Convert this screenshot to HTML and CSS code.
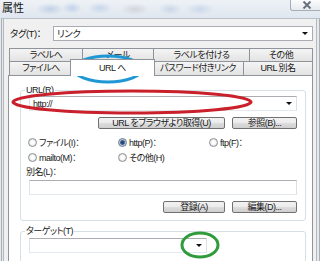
FILE: index.html
```html
<!DOCTYPE html>
<html lang="ja">
<head>
<meta charset="utf-8">
<title>属性</title>
<link rel="stylesheet" href="styles.css">
</head>
<body>
<div class="win">
  <div class="titlebar">
    <span class="title">属性</span>
    <span class="close"><svg width="10" height="8" viewBox="0 0 10 8"><path d="M1.5 0.5 L8.5 7.5 M8.5 0.5 L1.5 7.5" stroke="#6a727c" stroke-width="2" fill="none"/></svg></span>
  </div>
  <div class="frame">
    <div class="client">
      <div class="tagrow">
        <span class="lbl">タグ(T)：</span>
        <div class="combo tagcombo"><span>リンク</span><i class="arrow"></i></div>
      </div>
      <div class="tabs">
        <div class="tabrow back">
          <div class="tab w74">ラベルへ</div>
          <div class="tab w72">メール</div>
          <div class="tab w97">ラベルを付ける</div>
          <div class="tab w64">その他</div>
        </div>
        <div class="tabrow front">
          <div class="tab w64">ファイルへ</div>
          <div class="tab sel">URL へ</div>
          <div class="tab w92">パスワード付きリンク</div>
          <div class="tab w70">URL 別名</div>
        </div>
      </div>
      <div class="panel">
        <fieldset class="group">
          <legend>URL(R)</legend>
          <div class="combo urlcombo"><span>http://</span><i class="arrow"></i></div>
          <div class="btnrow">
            <div class="btn b127">URL をブラウザより取得(U)</div>
            <div class="btn b65">参照(B)...</div>
          </div>
          <div class="radios">
            <div class="radio"><i class="dot"></i><span>ファイル(I)：</span></div>
            <div class="radio"><i class="dot on"></i><span>http(P)：</span></div>
            <div class="radio"><i class="dot"></i><span>ftp(F)：</span></div>
            <div class="radio"><i class="dot"></i><span>mailto(M)：</span></div>
            <div class="radio"><i class="dot"></i><span>その他(H)</span></div>
          </div>
          <div class="alias">別名(L)：</div>
          <div class="input"></div>
          <div class="btnrow">
            <div class="btn b62">登録(A)</div>
            <div class="btn b65">編集(D)...</div>
          </div>
        </fieldset>
        <fieldset class="group target">
          <legend>ターゲット(T)</legend>
          <div class="combo targetcombo"><span></span><i class="arrow"></i></div>
        </fieldset>
      </div>
    </div>
  </div>
  <svg class="marks" width="320" height="261" viewBox="0 0 320 261">
    <ellipse cx="108" cy="69" rx="34" ry="13" fill="none" stroke="#1f97d4" stroke-width="3"/>
    <ellipse cx="132" cy="102" rx="119" ry="11" fill="none" stroke="#c9202b" stroke-width="3.2"/>
    <ellipse cx="200" cy="245" rx="18" ry="12" fill="none" stroke="#2f9b3b" stroke-width="3"/>
  </svg>
</div>
</body>
</html>
```
FILE: styles.css
```css
* { box-sizing: border-box; }
html, body { margin: 0; padding: 0; }
body {
  width: 320px;
  height: 261px;
  overflow: hidden;
  font-family: "Liberation Sans", "Noto Sans CJK JP", sans-serif;
  font-size: 9px;
  line-height: 12px;
  letter-spacing: -0.5px;
  font-feature-settings: "palt";
  color: #1a1a1a;
  background: #e2e9f1;
}
.win {
  position: relative;
  width: 320px;
  height: 261px;
  overflow: hidden;
}
.titlebar {
  height: 18px;
  display: flex;
  justify-content: space-between;
  align-items: flex-start;
  background:
    radial-gradient(ellipse 14px 6px at 50px 9px, rgba(150,175,215,0.45), transparent),
    radial-gradient(ellipse 10px 6px at 72px 8px, rgba(140,170,220,0.4), transparent),
    radial-gradient(ellipse 12px 6px at 100px 8px, rgba(150,180,225,0.4), transparent),
    radial-gradient(ellipse 14px 6px at 135px 9px, rgba(160,160,170,0.3), transparent),
    radial-gradient(ellipse 12px 6px at 170px 9px, rgba(150,175,215,0.35), transparent),
    radial-gradient(ellipse 14px 6px at 200px 9px, rgba(150,180,220,0.35), transparent),
    linear-gradient(#eef2f7, #dfe6ee);
}
.title {
  font-size: 11px;
  line-height: 13px;
  letter-spacing: 0;
  margin: 2px 0 0 2px;
  color: #111;
}
.close {
  width: 34px;
  height: 11px;
  margin-right: -4px;
  border: 1px solid #a6adb6;
  border-top: none;
  border-radius: 0 0 3px 3px;
  background: linear-gradient(#fbfcfd, #e6eaef);
  display: flex;
  align-items: center;
  justify-content: center;
}
.frame {
  height: 243px;
  margin-left: 1px;
  padding: 0 2px 0 1px;
  border-left: 1px solid #a9aeb4;
  border-top: 1px solid #b9c2cc;
  border-right: 1px solid #a9aeb4;
  background: #e4e9ef;
}
.client {
  height: 100%;
  border-left: 1px solid #b8b8b8;
  border-right: 1px solid #b8b8b8;
  background: #f0f0f0;
}
.tagrow {
  display: flex;
  align-items: center;
  padding-top: 7px;
  height: 22px;
}
.lbl {
  margin-left: 6px;
  width: 43px;
  font-size: 9.5px;
}
.combo {
  display: flex;
  align-items: center;
  justify-content: space-between;
  height: 15px;
  border: 1px solid;
  border-color: #abadb3 #dbdfe6 #e3e9ef #e2e3ea;
  background: #fff;
  padding: 0 4px 0 3px;
}
.tagcombo { width: 260px; border-color: #a9acb2; font-size: 9.5px; }
.arrow {
  width: 0;
  height: 0;
  border-left: 3px solid transparent;
  border-right: 3px solid transparent;
  border-top: 3px solid #111;
}
.tabs { margin: 7px 0 0 5px; }
.tabrow { display: flex; align-items: flex-end; }
.back { height: 13px; }
.front { height: 14px; }
.tab {
  height: 100%;
  border: 1px solid #8f939b;
  border-bottom: none;
  margin-right: -1px;
  background: linear-gradient(#f4f4f4, #e3e3e3);
  text-align: center;
  line-height: 12px;
  white-space: nowrap;
}
.w64 { width: 64px; }
.w70 { width: 70px; }
.w72 { width: 72px; }
.w74 { width: 74px; }
.w92 { width: 92px; }
.w97 { width: 97px; }
.tab.sel {
  position: relative;
  z-index: 2;
  width: 85px;
  height: 17px;
  margin: -2px -3px -1px -2px;
  background: #fff;
  line-height: 16px;
}
.panel {
  margin-left: 4px;
  width: 305px;
  height: 200px;
  border: 1px solid #8f939b;
  background: #fff;
}
.group {
  margin: 8px 0 0 11px;
  width: 286px;
  padding: 0 8px 7px;
  border: 1px solid #d5dfe5;
  border-radius: 3px;
  min-width: 0;
}
.group legend {
  padding: 0 1px;
  margin-left: -4px;
  height: 12px;
  line-height: 12px;
}
.urlcombo { width: 268px; }
.btnrow {
  display: flex;
  justify-content: flex-end;
  gap: 7px;
  margin-top: 6px;
}
.btn {
  height: 12px;
  border: 1px solid #707070;
  border-radius: 2px;
  background: linear-gradient(#f2f2f2 0%, #ebebeb 50%, #dddddd 51%, #cfcfcf 100%);
  line-height: 10px;
  text-align: center;
  white-space: nowrap;
}
.b127 { width: 127px; }
.b65 { width: 65px; }
.b62 { width: 62px; }
.radios {
  display: grid;
  grid-template-columns: 90px 91px 1fr;
  margin-top: 6px;
}
.radio {
  display: flex;
  align-items: center;
  height: 15px;
  gap: 2px;
  white-space: nowrap;
}
.dot {
  width: 9px;
  height: 9px;
  margin-left: -1px;
  border-radius: 50%;
  border: 1px solid #8e9091;
  background: radial-gradient(circle, #ffffff 0 1.5px, #dcdcdc 4px);
}
.dot.on {
  border-color: #6c7a8c;
  background: radial-gradient(circle, #2b4a7c 0 1.8px, #9fb4cc 2.6px, #e6edf5 4px);
}
.alias {
  margin: 1px 0 0 -3px;
  height: 12px;
}
.input {
  margin-top: 2px;
  width: 268px;
  height: 15px;
  border: 1px solid;
  border-color: #abadb3 #dbdfe6 #e3e9ef #e2e3ea;
  background: #fff;
}
.target { margin-top: 4px; height: 60px; }
.targetcombo { margin-top: 1px; width: 178px; }
.marks {
  position: absolute;
  left: 0;
  top: 0;
  pointer-events: none;
}
```
